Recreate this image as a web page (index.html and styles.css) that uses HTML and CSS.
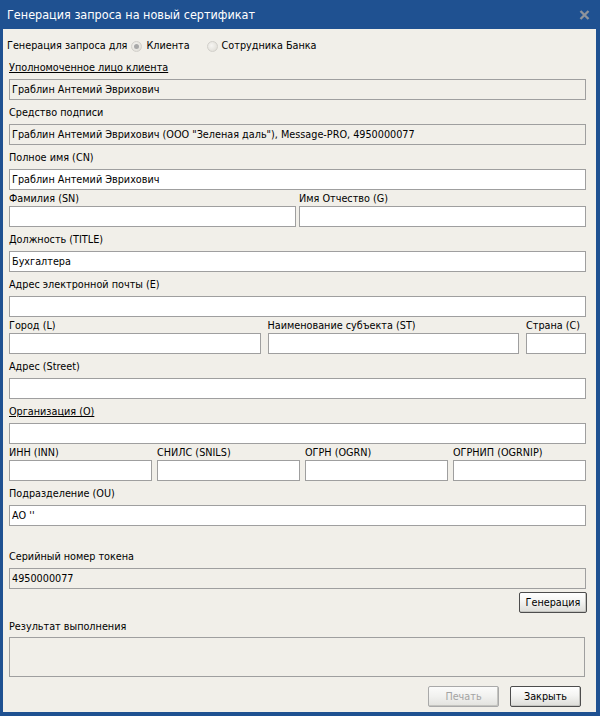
FILE: index.html
```html
<!DOCTYPE html>
<html lang="ru">
<head>
<meta charset="utf-8">
<title>Генерация запроса на новый сертификат</title>
<link rel="stylesheet" href="styles.css">
</head>
<body>
<div class="window">
  <div class="titlebar">
    <span class="title">Генерация запроса на новый сертификат</span>
    <svg class="close" width="11" height="10" viewBox="0 0 11 10"><path d="M1.5 1 L9.5 9 M9.5 1 L1.5 9" stroke="#8e939b" stroke-width="2.4" fill="none"/></svg>
  </div>
  <div class="content">
    <div class="radio-row">
      <span class="radio-caption">Генерация запроса для</span>
      <span class="radio checked"><span class="dot"></span></span><span class="radio-text">Клиента</span>
      <span class="radio"></span><span class="radio-text">Сотрудника Банка</span>
    </div>

    <div class="label first u">Уполномоченное лицо клиента</div>
    <div class="input ro">Граблин Антемий Эврихович</div>

    <div class="label">Средство подписи</div>
    <div class="input ro">Граблин Антемий Эврихович (ООО "Зеленая даль"), Message-PRO, 4950000077</div>

    <div class="label">Полное имя (CN)</div>
    <div class="input">Граблин Антемий Эврихович</div>

    <div class="cols cols-2">
      <div class="col"><div class="label small">Фамилия (SN)</div><div class="input"></div></div>
      <div class="col"><div class="label small">Имя Отчество (G)</div><div class="input"></div></div>
    </div>

    <div class="label">Должность (TITLE)</div>
    <div class="input">Бухгалтера</div>

    <div class="label">Адрес электронной почты (E)</div>
    <div class="input"></div>

    <div class="cols cols-3">
      <div class="col"><div class="label small">Город (L)</div><div class="input"></div></div>
      <div class="col"><div class="label small">Наименование субъекта (ST)</div><div class="input"></div></div>
      <div class="col"><div class="label small">Страна (C)</div><div class="input"></div></div>
    </div>

    <div class="label">Адрес (Street)</div>
    <div class="input"></div>

    <div class="label u">Организация (O)</div>
    <div class="input"></div>

    <div class="cols cols-4">
      <div class="col"><div class="label small">ИНН (INN)</div><div class="input"></div></div>
      <div class="col"><div class="label small">СНИЛС (SNILS)</div><div class="input"></div></div>
      <div class="col"><div class="label small">ОГРН (OGRN)</div><div class="input"></div></div>
      <div class="col"><div class="label small">ОГРНИП (OGRNIP)</div><div class="input"></div></div>
    </div>

    <div class="label">Подразделение (OU)</div>
    <div class="input">АО ''</div>

    <div class="label spaced">Серийный номер токена</div>
    <div class="input ro">4950000077</div>

    <div class="btn-row gen-row"><button class="btn gen">Генерация</button></div>

    <div class="label result-label">Результат выполнения</div>
    <div class="input ro area"></div>

    <div class="btn-row bottom-row">
      <button class="btn wide" disabled>Печать</button>
      <button class="btn wide">Закрыть</button>
    </div>
  </div>
</div>
</body>
</html>
```

FILE: styles.css
```css
html, body {
  margin: 0;
  padding: 0;
  background: #1f5191;
}
body {
  font-family: "DejaVu Sans Condensed", "DejaVu Sans", sans-serif;
  font-size: 10.75px;
  color: #000;
}
.window {
  width: 600px;
  height: 716px;
  box-sizing: border-box;
  background: #1f5191;
  display: flex;
  flex-direction: column;
  padding: 0 4px 4px 3px;
}
.titlebar {
  height: 29px;
  display: flex;
  align-items: center;
  justify-content: space-between;
  margin-left: -3px;
  margin-right: -4px;
  padding-left: 7px;
  padding-right: 10px;
}
.title {
  color: #fff;
  font-size: 12.5px;
  line-height: 16px;
  padding-top: 1px;
}
.close {
  display: block;
  margin-top: 1px;
}
.content {
  flex: 1;
  background: #f1efe9;
  padding: 0 10px 0 6px;
  display: flex;
  flex-direction: column;
}
.radio-row {
  display: flex;
  align-items: center;
  height: 14px;
  margin-top: 10px;
  line-height: 14px;
}
.radio-caption {
  margin-left: -2px;
  margin-right: 4px;
}
.radio {
  width: 11px;
  height: 11px;
  border-radius: 50%;
  box-sizing: border-box;
  border: 1px solid #d2d0cb;
  background: radial-gradient(circle at 40% 40%, #f6f5f2 0%, #e4e2dc 70%, #d8d6d0 100%);
  display: flex;
  align-items: center;
  justify-content: center;
  margin-right: 4px;
}
.radio .dot {
  width: 5px;
  height: 5px;
  border-radius: 50%;
  background: #a8a8a8;
}
.radio-text {
  margin-right: 17px;
}
.label {
  line-height: 14px;
  height: 14px;
  padding-top: 6px;
  padding-bottom: 4px;
  white-space: nowrap;
}
.label.first {
  padding-top: 8px;
}
.label.small {
  padding-top: 2px;
  padding-bottom: 0;
}
.label.u {
  text-decoration: underline;
}
.label.spaced {
  padding-top: 24px;
}
.label.result-label {
  padding-top: 7px;
  padding-bottom: 3px;
}
.input {
  height: 21px;
  box-sizing: border-box;
  border: 1px solid #9f9f9f;
  background: #fff;
  padding: 0 2px;
  line-height: 19px;
  white-space: nowrap;
  overflow: hidden;
}
.input.ro {
  background: #f1efe9;
}
.input.area {
  height: 40px;
  margin-right: 1px;
}
.cols {
  display: grid;
}
.cols-2 {
  grid-template-columns: 1fr 1fr;
  column-gap: 3px;
}
.cols-3 {
  grid-template-columns: 1fr 1fr 60px;
  column-gap: 7px;
}
.cols-4 {
  grid-template-columns: 143px 143px 143px 1fr;
  column-gap: 5px;
}
.col {
  min-width: 0;
}
.btn-row {
  display: flex;
  justify-content: flex-end;
}
.gen-row {
  margin-top: 3px;
  margin-right: -1px;
}
.bottom-row {
  margin-top: 9px;
  margin-right: 5px;
  gap: 11px;
}
.btn {
  font-family: inherit;
  font-size: 10.75px;
  height: 21px;
  box-sizing: border-box;
  border: 1px solid #4d4d4d;
  border-radius: 2px;
  background: linear-gradient(#ffffff 0%, #f4f4f2 45%, #dcdcd8 100%);
  color: #000;
  padding: 0;
  margin: 0;
  line-height: 19px;
  box-shadow: inset -1px -1px 0 #c4c4c0;
}
.btn.gen {
  width: 68px;
}
.btn.wide {
  width: 71px;
}
.btn:disabled {
  border-color: #a9a9a9;
  color: #a3a3a3;
  background: linear-gradient(#fbfbfa 0%, #f1f1ef 50%, #e2e2de 100%);
}
```
